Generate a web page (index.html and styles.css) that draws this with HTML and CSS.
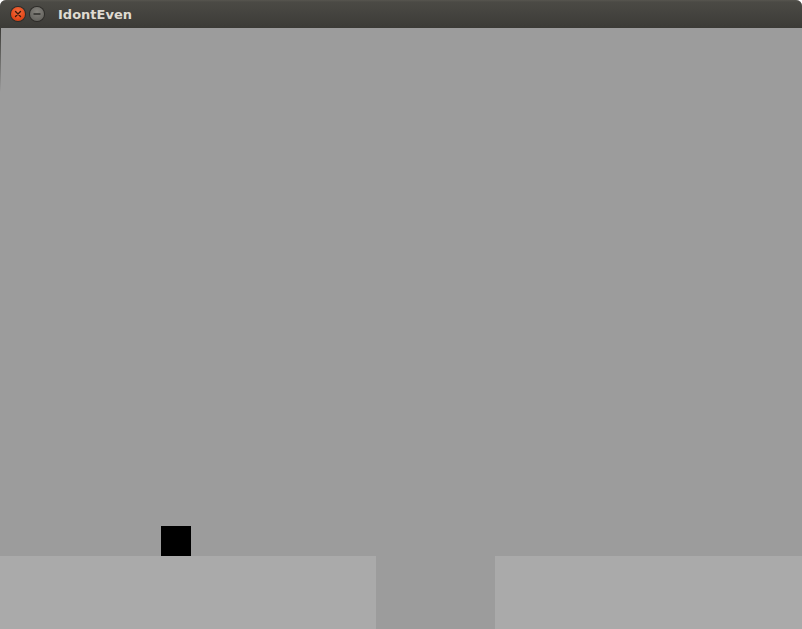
FILE: index.html
```html
<!DOCTYPE html>
<html>
<head>
<meta charset="utf-8">
<link rel="stylesheet" href="styles.css">
</head>
<body>
<div class="window">
  <div class="titlebar">
    <div class="buttons">
      <span class="btn close">
        <svg width="8" height="8" viewBox="0 0 8 8"><path d="M1.5 1.5 L6.5 6.5 M6.5 1.5 L1.5 6.5" stroke="#3a1a0a" stroke-width="1.4" stroke-linecap="round"/></svg>
      </span>
      <span class="btn min">
        <svg width="8" height="8" viewBox="0 0 8 8"><path d="M1 4 H7" stroke="#2e2e2b" stroke-width="1.4" stroke-linecap="round"/></svg>
      </span>
    </div>
    <span class="title">IdontEven</span>
  </div>
  <div class="canvas">
    <div class="sky">
      <div class="player"></div>
    </div>
    <div class="ground">
      <div class="platform left"></div>
      <div class="gap"></div>
      <div class="platform right"></div>
    </div>
  </div>
</div>
</body>
</html>
```
FILE: styles.css
```css
html, body {
  margin: 0;
  padding: 0;
  background: #ffffff;
  width: 802px;
  height: 629px;
  overflow: hidden;
}
.window {
  width: 802px;
  height: 629px;
  display: flex;
  flex-direction: column;
  border-radius: 6px 6px 0 0;
  overflow: hidden;
  background: #9c9c9c;
}
.titlebar {
  height: 28px;
  flex: 0 0 28px;
  background: linear-gradient(#57554f 0px, #4b4a45 2px, #3c3b37 100%);
  display: flex;
  align-items: center;
  padding-left: 11px;
  box-sizing: border-box;
}
.buttons {
  display: flex;
  gap: 5px;
  align-items: center;
}
.btn {
  width: 14px;
  height: 14px;
  border-radius: 50%;
  display: flex;
  align-items: center;
  justify-content: center;
}
.close {
  background: radial-gradient(circle at 50% 35%, #f46f43 0%, #e5491a 60%, #c13a0e 100%);
  box-shadow: 0 0 0 1px #2d2c29;
}
.min {
  background: radial-gradient(circle at 50% 35%, #85837d 0%, #6c6b66 60%, #595853 100%);
  box-shadow: 0 0 0 1px #2d2c29;
}
.title {
  margin-left: 14px;
  font-family: "DejaVu Sans", "Liberation Sans", sans-serif;
  font-weight: bold;
  font-size: 13px;
  color: #dfdbd2;
}
.canvas {
  flex: 1;
  display: flex;
  flex-direction: column;
  background-color: #9c9c9c;
  background-image: linear-gradient(#3c3b37, #9c9c9c);
  background-size: 1px 64px;
  background-repeat: no-repeat;
  background-position: 0 0;
}
.sky {
  flex: 1;
  position: relative;
}
.player {
  position: absolute;
  left: 161px;
  bottom: 0;
  width: 30px;
  height: 30px;
  background: #000;
}
.ground {
  height: 73px;
  display: flex;
}
.platform {
  background: #aaaaaa;
}
.left {
  width: 376px;
}
.gap {
  width: 119px;
  background: #9c9c9c;
}
.right {
  flex: 1;
}
```
